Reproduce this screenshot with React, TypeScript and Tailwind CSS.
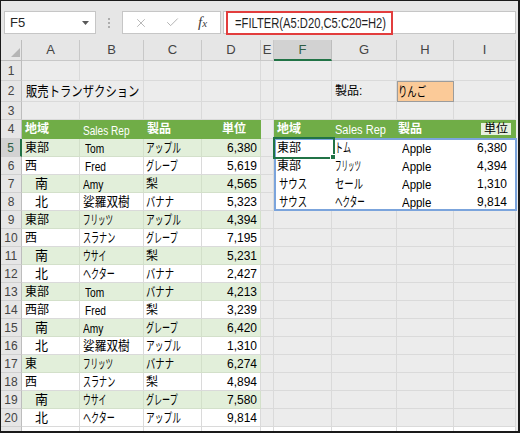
import type { ReactNode } from "react";
import { Check, X } from "lucide-react";

const COLS = ["A", "B", "C", "D", "E", "F", "G", "H", "I"];
const COL_W = [
  "w-[58px]",
  "w-[64px]",
  "w-[58px]",
  "w-[59px]",
  "w-[13px]",
  "w-[58px]",
  "w-[65px]",
  "w-[57px]",
  "w-[62px]",
];

const DATA = [
  ["東部", "Tom", "アップル", "6,380"],
  ["西", "Fred", "グレープ", "5,619"],
  ["南", "Amy", "梨", "4,565"],
  ["北", "娑羅双樹", "バナナ", "5,323"],
  ["東部", "フリッツ", "アップル", "4,394"],
  ["西", "スラナン", "グレープ", "7,195"],
  ["南", "ウサイ", "梨", "5,231"],
  ["北", "ヘクター", "バナナ", "2,427"],
  ["東部", "Tom", "バナナ", "4,213"],
  ["西部", "Fred", "梨", "3,239"],
  ["南", "Amy", "グレープ", "6,420"],
  ["北", "娑羅双樹", "アップル", "1,310"],
  ["東", "フリッツ", "バナナ", "6,274"],
  ["西", "スラナン", "梨", "4,894"],
  ["南", "ウサイ", "グレープ", "7,580"],
  ["北", "ヘクター", "アップル", "9,814"],
];

const RESULT = [
  ["東部", "トム", "Apple", "6,380"],
  ["東部", "フリッツ", "Apple", "4,394"],
  ["サウス", "セール", "Apple", "1,310"],
  ["サウス", "ヘクター", "Apple", "9,814"],
];

// katakana in the screenshot is drawn narrow
const SQ: Record<string, string> = {
  フリッツ: "scale-x-[0.58]",
  スラナン: "scale-x-[0.62]",
  ウサイ: "scale-x-[0.6]",
  ヘクター: "scale-x-[0.62]",
  アップル: "scale-x-[0.67]",
  グレープ: "scale-x-[0.62]",
  バナナ: "scale-x-[0.72]",
  娑羅双樹: "scale-x-[0.9]",
};

const RSQ: Record<string, string> = {
  トム: "scale-x-[0.62]",
  フリッツ: "scale-x-[0.5]",
  セール: "scale-x-[0.72]",
  ヘクター: "scale-x-[0.58]",
  サウス: "scale-x-[0.72]",
};

const LATIN = ["Tom", "Fred", "Amy"];
const GRID = "border-[#dadada]";
const HEAD = "bg-[#70ad47] border-[#70ad47] text-white";

function Sq({ t, c = "" }: { t: string; c?: string }) {
  return <span className={`inline-block origin-left whitespace-nowrap ${c}`}>{t}</span>;
}

type Cell = { node?: ReactNode; cls: string };

function cells(r: number): Cell[] {
  const out: Cell[] = COLS.map(() => ({ cls: GRID }));

  if (r === 2) {
    out[0] = {
      cls: "border-r-transparent border-b-[#dadada] pl-[4px]",
      node: <Sq t="販売トランザクション" c="scale-x-[0.81] text-[14px]" />,
    };
    out[6] = { cls: `${GRID} pl-[3px] text-[12px]`, node: "製品:" };
    out[7] = {
      cls: "bg-[#fbca98] border-[#9c9c9c] shadow-[inset_1px_1px_0_#9c9c9c] pl-[1px]",
      node: <Sq t="りんご" c="scale-x-[0.72] text-[13px]" />,
    };
  }

  if (r === 4) {
    out[0] = { cls: `${HEAD} pl-[3px] text-[12px] font-bold`, node: "地域" };
    out[1] = {
      cls: `${HEAD} pl-[3px] pt-[3px]`,
      node: <Sq t="Sales Rep" c="scale-x-[0.84] text-[12px]" />,
    };
    out[2] = { cls: `${HEAD} pl-[3px] text-[12px] font-bold`, node: "製品" };
    out[3] = { cls: `${HEAD} justify-end pr-[14px] text-[12px] font-bold`, node: "単位" };
    out[5] = { cls: `${HEAD} pl-[3px] text-[12px] font-bold`, node: "地域" };
    out[6] = {
      cls: `${HEAD} pl-[3px] pt-[2px]`,
      node: <Sq t="Sales Rep" c="scale-x-[0.92] text-[12px]" />,
    };
    out[7] = { cls: `${HEAD} pl-[1px] text-[12px] font-bold`, node: "製品" };
    out[8] = {
      cls: `${HEAD} justify-end pr-[4px]`,
      node: (
        <span className="flex h-[12px] items-center bg-[#e6f0de] px-[3px] text-[12px] text-black">
          単位
        </span>
      ),
    };
  }

  if (r >= 5 && r <= 20) {
    const [a, b, c, d] = DATA[r - 5];
    const band = (r - 5) % 2 === 0;
    const bc = band ? "bg-[#e2efda] border-[#d3e0ca]" : "bg-white border-[#dadada]";
    out[0] = {
      cls: `${bc} ${a === "南" || a === "北" ? "pl-[13px] text-[13px]" : "pl-[3px] text-[12px]"}`,
      node: a,
    };
    out[1] = LATIN.includes(b)
      ? {
          cls: `${bc} ${b === "Amy" ? "pl-[3px]" : "pl-[5px]"} pt-[3px]`,
          node: <Sq t={b} c="scale-x-[0.85] text-[12px]" />,
        }
      : { cls: `${bc} pl-[3px] text-[13px]`, node: <Sq t={b} c={SQ[b]} /> };
    out[2] = SQ[c]
      ? { cls: `${bc} pl-[2px] text-[13px]`, node: <Sq t={c} c={SQ[c]} /> }
      : { cls: `${bc} pl-[2px] text-[12px]`, node: c };
    out[3] = { cls: `${bc} justify-end pr-[3px] text-[12px]`, node: d };

    if (r <= 8) {
      const [f, g, h, i] = RESULT[r - 5];
      out[5] = {
        cls: `bg-white border-white ${f === "サウス" ? "pl-[5px]" : "pl-[3px]"}`,
        node:
          f === "東部" ? (
            <span className="text-[12px]">東部</span>
          ) : (
            <Sq t={f} c={`text-[13px] ${RSQ[f]}`} />
          ),
      };
      out[6] = {
        cls: "bg-white border-white pl-[3px]",
        node: <Sq t={g} c={`text-[13px] ${RSQ[g]}`} />,
      };
      out[7] = {
        cls: "bg-white border-white pl-[5px] pt-[2px]",
        node: <Sq t={h} c="scale-x-[0.88] text-[13px]" />,
      };
      out[8] = { cls: "bg-white border-white justify-end pr-[8px] text-[12px]", node: i };
    }
  }

  return out;
}

function Toolbar() {
  return (
    <div className="flex h-[39px] shrink-0 items-start bg-[#e6e6e6] pl-[3px] pr-[2px] pt-[10px]">
      <div className="flex h-[23px] w-[92px] items-center justify-between border border-[#c6c6c6] bg-white pl-[5px] pr-[6px]">
        <span className="text-[13px] text-[#262626]">F5</span>
        <svg width="7" height="4" viewBox="0 0 7 4">
          <path d="M0 0h7L3.5 4z" fill="#595959" />
        </svg>
      </div>
      <div className="ml-[12px] flex h-[23px] flex-col justify-center gap-[2px]">
        <span className="block h-[2px] w-[2px] rounded-full bg-[#9a9a9a]" />
        <span className="block h-[2px] w-[2px] rounded-full bg-[#9a9a9a]" />
        <span className="block h-[2px] w-[2px] rounded-full bg-[#9a9a9a]" />
      </div>
      <div className="ml-[12px] flex h-[23px] w-[99px] items-center border border-[#c6c6c6] bg-white pl-[11px]">
        <X size={14} strokeWidth={1.4} className="text-[#a8a8a8]" />
        <Check size={15} strokeWidth={1.4} className="ml-[17px] text-[#a8a8a8]" />
        <span className="ml-[18px] font-['Liberation_Serif',serif] text-[15px] italic leading-none text-[#404040]">
          f<span className="text-[11px]">x</span>
        </span>
      </div>
      <div className="ml-[2px] flex h-[23px] flex-1 border border-[#c6c6c6] bg-white">
        <div className="-mt-px ml-[2px] flex h-[24px] w-[167px] items-center border-2 border-[#e23d3d] pl-[7px]">
          <Sq t="=FILTER(A5:D20,C5:C20=H2)" c="scale-x-[0.8] text-[14px] text-[#1f1f1f]" />
        </div>
      </div>
    </div>
  );
}

function HeaderRow() {
  return (
    <div className="flex h-[21px]">
      <div className="flex w-[21px] shrink-0 items-end justify-end border-b border-r border-[#bdbdbd] bg-[#e6e6e6] pb-[3px] pr-[1px]">
        <svg width="9" height="9" viewBox="0 0 9 9">
          <path d="M9 0V9H0z" fill="#b5b5b5" />
        </svg>
      </div>
      {COLS.map((c, i) => (
        <div
          key={c}
          className={`${COL_W[i]} flex shrink-0 items-center justify-center text-[13px] ${
            c === "F"
              ? "border-r border-b-2 border-r-[#bdbdbd] border-b-[#217346] bg-[#d2d2d2] text-[#2f5d45]"
              : "border-b border-r border-[#c8c8c8] bg-[#e6e6e6] text-[#444]"
          }`}
        >
          {c}
        </div>
      ))}
    </div>
  );
}

function Row({ r }: { r: number }) {
  const h = r === 1 ? "h-[20px]" : r === 2 ? "h-[21px]" : r === 4 ? "h-[19px]" : "h-[18px]";
  const sel = r === 5;
  return (
    <div className={`flex ${h}`}>
      <div
        className={`flex w-[21px] shrink-0 items-center justify-center border-b border-b-[#d0d0d0] text-[12px] ${
          sel
            ? "border-r-2 border-r-[#217346] bg-[#d2d2d2] text-[#2f5d45]"
            : "border-r border-r-[#bdbdbd] bg-[#e6e6e6] text-[#444]"
        }`}
      >
        {r}
      </div>
      {cells(r).map((c, i) => (
        <div
          key={i}
          className={`${COL_W[i]} flex shrink-0 items-center whitespace-nowrap border-b border-r leading-none ${c.cls}`}
        >
          {c.node}
        </div>
      ))}
    </div>
  );
}

function Grid() {
  const rows = Array.from({ length: 20 }, (_, i) => i + 1);
  return (
    <div className="relative flex-1 bg-[#ececec]">
      <HeaderRow />
      {rows.map((r) => (
        <Row key={r} r={r} />
      ))}
      <div className="flex h-[4px]">
        <div className="w-[21px] shrink-0 border-r border-[#bdbdbd] bg-[#e6e6e6]" />
        {COL_W.map((w, i) => (
          <div key={i} className={`${w} shrink-0 border-r border-[#dadada] bg-white`} />
        ))}
      </div>

      {/* spill range */}
      <div className="pointer-events-none absolute left-[273px] top-[98px] h-[73px] w-[243px] border-2 border-[#7ba4dc]" />
      {/* active cell F5 */}
      <div className="pointer-events-none absolute left-[272px] top-[97px] h-[22px] w-[62px] border-2 border-[#217346]">
        <div className="absolute -bottom-[3px] -right-[3px] h-[6px] w-[6px] border border-white bg-[#217346]" />
      </div>
    </div>
  );
}

export default function App() {
  return (
    <div className="flex h-[433px] w-[520px] flex-col overflow-hidden border-b-2 border-l border-r-2 border-t border-[#1a1a1a] bg-white font-['Liberation_Sans','Noto_Sans_CJK_JP',sans-serif] text-black">
      <Toolbar />
      <Grid />
    </div>
  );
}
